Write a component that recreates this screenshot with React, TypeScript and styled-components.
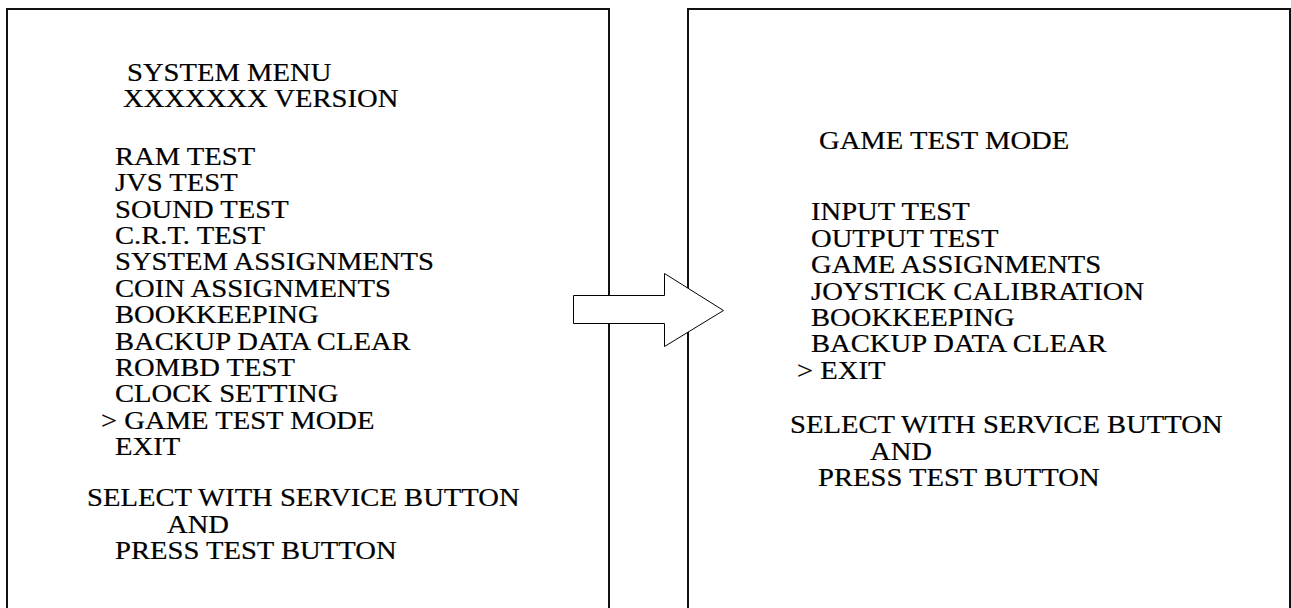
import styled, { createGlobalStyle } from "styled-components";

const GlobalStyle = createGlobalStyle`
  html,
  body {
    margin: 0;
    background: #fff;
    overflow: hidden;
  }

  body {
    font-family: "Liberation Serif", "Times New Roman", serif;
    color: #000;
  }
`;

const Stage = styled.main`
  position: relative;
  display: flex;
  gap: 77px;
  padding: 8px 0 0 6px;
  height: 608px;
  box-sizing: border-box;
  overflow: hidden;
`;

const Panel = styled.section<{ $top: number }>`
  flex: none;
  width: 604px;
  height: 640px;
  box-sizing: border-box;
  border: 2px solid #111;
  padding-top: ${(p) => p.$top}px;
`;

const Line = styled.div<{ $indent: number; $gap: number }>`
  padding-left: ${(p) => p.$indent}px;
  margin-top: ${(p) => p.$gap}px;
  height: 26.4px;
  font-size: 25px;
  line-height: 26.4px;
  white-space: pre;
`;

// the screen text is drawn wider than the font's normal proportions
const Text = styled.span`
  display: inline-block;
  transform: scaleX(1.145);
  transform-origin: left center;
  -webkit-text-stroke: 0.2px #000;
`;

const Arrow = styled.svg`
  position: absolute;
  left: 572px;
  top: 272px;
`;

type Row = { text: string; x: number; gap?: number };

const systemMenu: Row[] = [
  { text: "SYSTEM MENU", x: 127 },
  { text: "XXXXXXX VERSION", x: 123 },
  { text: "RAM TEST", x: 115, gap: 31 },
  { text: "JVS TEST", x: 115 },
  { text: "SOUND TEST", x: 115 },
  { text: "C.R.T. TEST", x: 115 },
  { text: "SYSTEM ASSIGNMENTS", x: 115 },
  { text: "COIN ASSIGNMENTS", x: 115 },
  { text: "BOOKKEEPING", x: 115 },
  { text: "BACKUP DATA CLEAR", x: 115 },
  { text: "ROMBD TEST", x: 115 },
  { text: "CLOCK SETTING", x: 115 },
  { text: "> GAME TEST MODE", x: 101 },
  { text: "EXIT", x: 115 },
  { text: "SELECT WITH SERVICE BUTTON", x: 87, gap: 25 },
  { text: "AND", x: 167 },
  { text: "PRESS TEST BUTTON", x: 115 },
];

const gameTest: Row[] = [
  { text: "GAME TEST MODE", x: 819 },
  { text: "INPUT TEST", x: 811, gap: 45 },
  { text: "OUTPUT TEST", x: 811 },
  { text: "GAME ASSIGNMENTS", x: 811 },
  { text: "JOYSTICK CALIBRATION", x: 811 },
  { text: "BOOKKEEPING", x: 811 },
  { text: "BACKUP DATA CLEAR", x: 811 },
  { text: "> EXIT", x: 797 },
  { text: "SELECT WITH SERVICE BUTTON", x: 790, gap: 28 },
  { text: "AND", x: 870 },
  { text: "PRESS TEST BUTTON", x: 818 },
];

function Screen({ rows, left, top }: { rows: Row[]; left: number; top: number }) {
  return (
    <Panel $top={top}>
      {rows.map((r) => (
        <Line key={r.text} $indent={r.x - left} $gap={r.gap ?? 0}>
          <Text>{r.text}</Text>
        </Line>
      ))}
    </Panel>
  );
}

export default function App() {
  return (
    <>
      <GlobalStyle />
      <Stage>
        <Screen rows={systemMenu} left={8} top={50} />
        <Screen rows={gameTest} left={689} top={118} />
        <Arrow width="154" height="78" viewBox="0 0 154 78">
          <polygon
            points="1.5,23.5 92.5,23.5 92.5,1.5 151.5,38.5 92.5,74.5 92.5,51.5 1.5,51.5"
            fill="#fff"
            stroke="#000"
            strokeWidth="1"
          />
        </Arrow>
      </Stage>
    </>
  );
}
